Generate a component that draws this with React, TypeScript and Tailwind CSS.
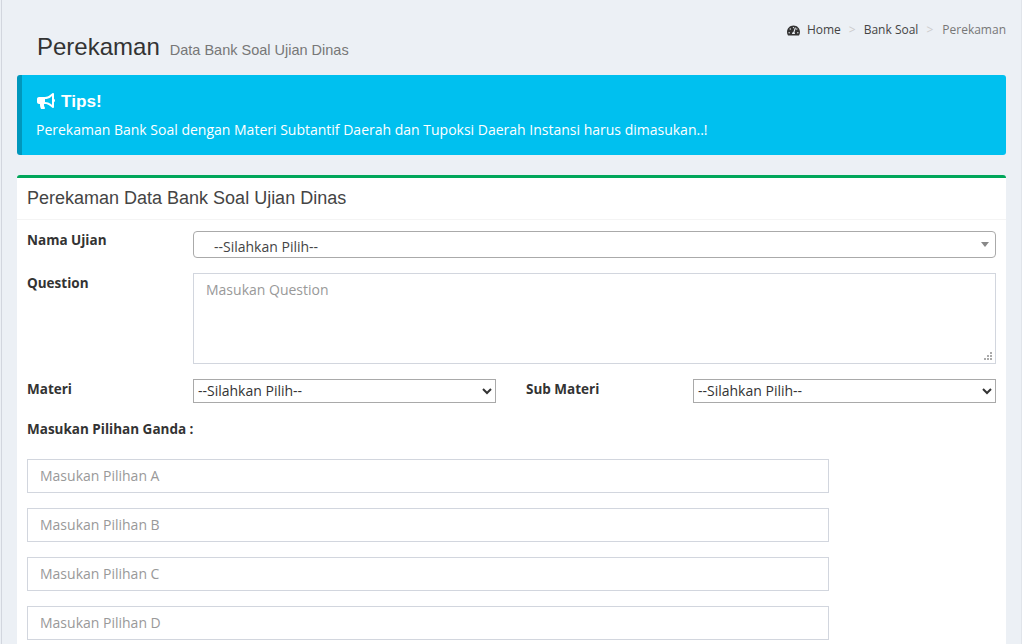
import React from "react";
import { FaBullhorn, FaTachometerAlt } from "react-icons/fa";

const sans = "font-['Open_Sans',sans-serif]";
const arial = "font-['Liberation_Sans',Arial,sans-serif]";
const label = "text-[13.5px] font-bold leading-[20px] text-[#333]";

function Field({ placeholder }: { placeholder: string }) {
  return (
    <input
      placeholder={placeholder}
      className={`block w-[802px] h-[34px] border border-[#d2d6de] bg-white px-3 pb-[2px] text-[14px] text-[#555] placeholder:text-[#999] outline-none ${sans}`}
    />
  );
}

function NativeSelect() {
  return (
    <select className={`h-6 w-[303px] border border-[#a9a9a9] bg-white pb-px text-[14px] text-[#333] outline-none ${sans}`}>
      <option>--Silahkan Pilih--</option>
    </select>
  );
}

function Grip() {
  return (
    <svg width="9" height="9" viewBox="0 0 9 9" fill="#aaa" className="absolute bottom-[3px] right-[3px]">
      <rect x="6" y="0" width="2" height="2" />
      <rect x="3" y="3" width="2" height="2" />
      <rect x="6" y="3" width="2" height="2" />
      <rect x="0" y="6" width="2" height="2" />
      <rect x="3" y="6" width="2" height="2" />
      <rect x="6" y="6" width="2" height="2" />
    </svg>
  );
}

export default function App() {
  return (
    <div className={`h-[644px] w-[1022px] overflow-hidden bg-[#ecf0f5] pl-px text-[#333] ${sans}`}>
      <div className="h-full border-l border-r border-l-[#d2d6de] border-r-[#e0e4ea] pl-[15px] pr-[15px]">
        <div className="flex h-[75px] items-start justify-between">
          <div className="flex items-baseline pl-5 pt-[31px]">
            <h1 className={`text-[24px] leading-[32px] text-[#333] ${arial}`}>Perekaman</h1>
            <span className={`ml-[10px] text-[14.5px] text-[#777] ${arial}`}>Data Bank Soal Ujian Dinas</span>
          </div>
          <div className="flex items-center pt-[22px] text-[12px] leading-[16px]">
            <FaTachometerAlt size={13} className="text-[#333]" />
            <span className="ml-[7px] text-[#444]">Home</span>
            <span className="mx-[8px] text-[#ccc]">&gt;</span>
            <span className="text-[#444]">Bank Soal</span>
            <span className="ml-[8px] mr-[9px] text-[#ccc]">&gt;</span>
            <span className="text-[#777]">Perekaman</span>
          </div>
        </div>

        <div className="h-20 rounded-[3px] border-l-[5px] border-l-[#0097bc] bg-[#00c0ef] pl-[14px] pt-[15px] text-white">
          <div className={`ml-px flex items-center gap-[6px] text-[17.2px] font-bold leading-[22px] ${arial}`}>
            <FaBullhorn size={18} />
            <span>Tips!</span>
          </div>
          <p className="mt-[8px] text-[14px] leading-[20px]">
            Perekaman Bank Soal dengan Materi Subtantif Daerah dan Tupoksi Daerah Instansi harus dimasukan..!
          </p>
        </div>

        <div className="mt-5 h-[600px] rounded-t-[3px] border-t-[3px] border-t-[#00a65a] bg-white">
          <div className={`h-[42px] border-b border-b-[#f4f4f4] pl-[10px] pt-[9px] text-[18px] leading-[22px] text-[#444] ${arial}`}>
            Perekaman Data Bank Soal Ujian Dinas
          </div>

          <div className="px-[10px]">
            <div className="mt-[11px] flex">
              <label className={`-mt-px w-[166px] ${label}`}>Nama Ujian</label>
              <div className="relative flex h-[27px] w-[803px] items-center rounded-[4px] border border-[#aaa] pl-5 pt-[4px] text-[14px] text-[#444]">
                --Silahkan Pilih--
                <span className="absolute right-[6px] top-[10px] h-0 w-0 border-x-[4px] border-t-[5px] border-x-transparent border-t-[#888]" />
              </div>
            </div>

            <div className="mt-[15px] flex">
              <label className={`w-[166px] ${label}`}>Question</label>
              <div className="relative h-[91px] w-[803px]">
                <textarea
                  placeholder="Masukan Question"
                  className="block h-full w-full resize-none border border-[#d2d6de] px-3 py-[6px] text-[14px] leading-[20px] text-[#555] placeholder:text-[#999] outline-none"
                />
                <Grip />
              </div>
            </div>

            <div className="mt-[15px] flex items-start">
              <label className={`w-[166px] ${label}`}>Materi</label>
              <NativeSelect />
              <label className={`ml-[30px] w-[167px] ${label}`}>Sub Materi</label>
              <NativeSelect />
            </div>

            <div className={`mt-[16px] ${label}`}>Masukan Pilihan Ganda :</div>

            <div className="mt-[20px] flex flex-col gap-[15px]">
              <Field placeholder="Masukan Pilihan A" />
              <Field placeholder="Masukan Pilihan B" />
              <Field placeholder="Masukan Pilihan C" />
              <Field placeholder="Masukan Pilihan D" />
            </div>
          </div>
        </div>
      </div>
    </div>
  );
}
